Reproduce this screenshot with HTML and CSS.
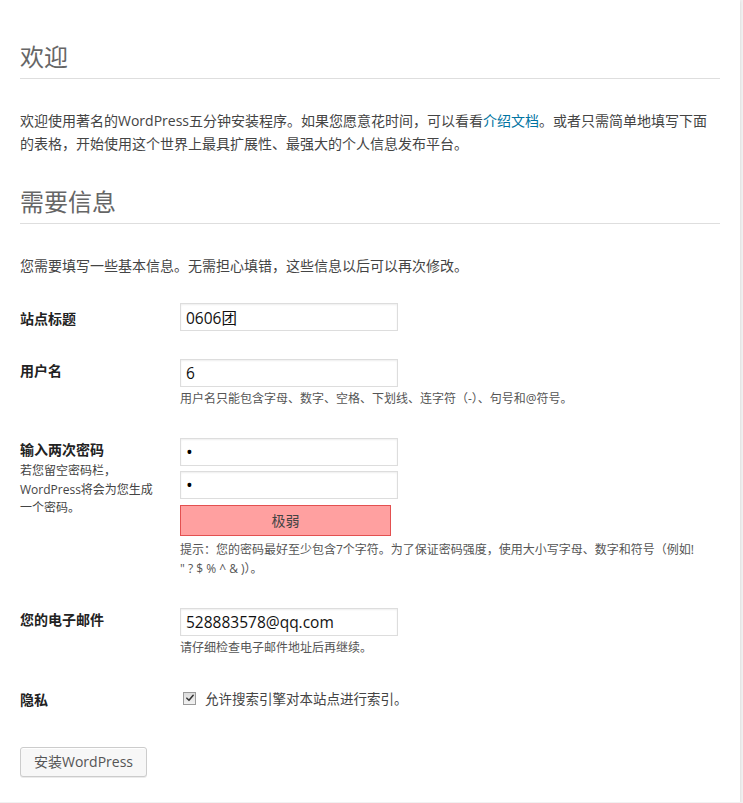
FILE: index.html
```html
<!DOCTYPE html>
<html lang="zh-CN">
<head>
<meta charset="utf-8">
<title>WordPress › 安装</title>
<link rel="stylesheet" href="styles.css">
</head>
<body>
<div class="card">
  <h1 class="heading">欢迎</h1>
  <p class="intro">欢迎使用著名的WordPress五分钟安装程序。如果您愿意花时间，可以看看<a class="link" href="#">介绍文档</a>。或者只需简单地填写下面的表格，开始使用这个世界上最具扩展性、最强大的个人信息发布平台。</p>
  <h1 class="heading">需要信息</h1>
  <p class="intro">您需要填写一些基本信息。无需担心填错，这些信息以后可以再次修改。</p>
  <form class="form">
    <div class="row row-first">
      <div class="label-col"><label class="label label-mid">站点标题</label></div>
      <div class="field-col"><input class="text-input" type="text" value="0606团"></div>
    </div>
    <div class="row">
      <div class="label-col"><label class="label">用户名</label></div>
      <div class="field-col">
        <input class="text-input" type="text" value="6">
        <p class="desc">用户名只能包含字母、数字、空格、下划线、连字符（-）、句号和@符号。</p>
      </div>
    </div>
    <div class="row">
      <div class="label-col">
        <label class="label">输入两次密码</label>
        <p class="label-desc">若您留空密码栏，WordPress将会为您生成一个密码。</p>
      </div>
      <div class="field-col">
        <input class="text-input pass-input" type="password" value="6">
        <input class="text-input pass-input pass-second" type="password" value="6">
        <div class="meter">极弱</div>
        <p class="hint">提示：您的密码最好至少包含7个字符。为了保证密码强度，使用大小写字母、数字和符号（例如! " ? $ % ^ &amp; )）。</p>
      </div>
    </div>
    <div class="row">
      <div class="label-col"><label class="label">您的电子邮件</label></div>
      <div class="field-col">
        <input class="text-input" type="text" value="528883578@qq.com">
        <p class="desc">请仔细检查电子邮件地址后再继续。</p>
      </div>
    </div>
    <div class="row row-last">
      <div class="label-col"><label class="label label-low">隐私</label></div>
      <div class="field-col">
        <label class="check-line"><span class="checkbox"><svg viewBox="0 0 12 12" width="10" height="10"><path d="M2.2 6.2 L4.8 8.8 L9.8 2.8" fill="none" stroke="#333" stroke-width="1.8" stroke-linecap="round" stroke-linejoin="round"/></svg></span><span class="check-text">允许搜索引擎对本站点进行索引。</span></label>
      </div>
    </div>
    <div class="submit">
      <button class="button" type="button">安装WordPress</button>
    </div>
  </form>
</div>
</body>
</html>
```

FILE: styles.css
```css
html, body {
  margin: 0;
  padding: 0;
}

body {
  background: #f1f1f1;
  color: #444;
  font-family: "Open Sans", "Noto Sans CJK SC", sans-serif;
  font-size: 14px;
}

.card {
  width: 700px;
  padding: 12px 20px 10px 20px;
  background: #fff;
  box-shadow: 0 1px 3px rgba(0, 0, 0, 0.13);
}

.heading {
  margin: 30px 0;
  padding: 0 0 7px 0;
  border-bottom: 1px solid #dedede;
  color: #666;
  font-size: 24px;
  font-weight: normal;
  line-height: 29px;
}

.intro {
  margin: 25px 0 20px 0;
  padding-bottom: 2px;
  font-size: 14px;
  line-height: 23px;
}

.link {
  color: #0074a2;
  text-decoration: none;
}

.form {
  margin-top: 24px;
}

.row {
  display: grid;
  grid-template-columns: 160px 520px;
  margin-bottom: 30px;
}

.row-first {
  margin-bottom: 28px;
}

.row-last {
  margin-bottom: 0;
}

.label-col {
  display: flex;
  flex-direction: column;
}

.label {
  display: block;
  padding-top: 2px;
  color: #222;
  font-size: 14px;
  font-weight: bold;
  line-height: 20px;
}

.label-mid {
  padding-top: 6px;
}

.label-low {
  padding-top: 3px;
}

.label-desc {
  width: 140px;
  margin: 2px 0 0 0;
  color: #444;
  font-size: 12px;
  line-height: 18.5px;
}

.field-col {
  display: flex;
  flex-direction: column;
  align-items: flex-start;
}

.text-input {
  box-sizing: border-box;
  width: 218px;
  height: 28px;
  margin: 0;
  padding: 3px 5px;
  border: 1px solid #ddd;
  border-radius: 0;
  background: #fff;
  box-shadow: inset 0 1px 2px rgba(0, 0, 0, 0.07);
  color: #111;
  font-family: "Open Sans", "Noto Sans CJK SC", sans-serif;
  font-size: 15.5px;
  line-height: 20px;
  outline: none;
}

.pass-input {
  font-size: 18px;
  color: #000;
}

.pass-second {
  margin-top: 5px;
}

.desc {
  margin: 3px 0 0 0;
  color: #555;
  font-size: 12px;
  line-height: 18px;
}

.meter {
  box-sizing: border-box;
  width: 211px;
  height: 31px;
  margin-top: 6px;
  border: 1px solid #e35050;
  background: #ffa0a0;
  color: #444;
  font-size: 14px;
  line-height: 30px;
  text-align: center;
}

.hint {
  width: 520px;
  margin: 4px 0 0 0;
  color: #555;
  font-size: 12px;
  line-height: 19px;
}

.check-line {
  display: flex;
  align-items: center;
  height: 22px;
  color: #444;
  font-size: 13.5px;
}

.checkbox {
  box-sizing: border-box;
  display: inline-flex;
  align-items: center;
  justify-content: center;
  width: 13px;
  height: 13px;
  margin-left: 3px;
  border: 1px solid #9a9a9a;
  background: linear-gradient(#dcdcdc, #f2f2f2);
}

.check-text {
  margin-left: 9px;
}

.submit {
  margin: 37px 0 15px 0;
}

.button {
  height: 30px;
  margin: 0;
  padding: 0 13px;
  border: 1px solid #ccc;
  border-radius: 3px;
  background: #f7f7f7;
  box-shadow: inset 0 1px 0 #fff, 0 1px 0 rgba(0, 0, 0, 0.08);
  color: #555;
  font-family: "Open Sans", "Noto Sans CJK SC", sans-serif;
  font-size: 14px;
  line-height: 28px;
  cursor: pointer;
}
```
